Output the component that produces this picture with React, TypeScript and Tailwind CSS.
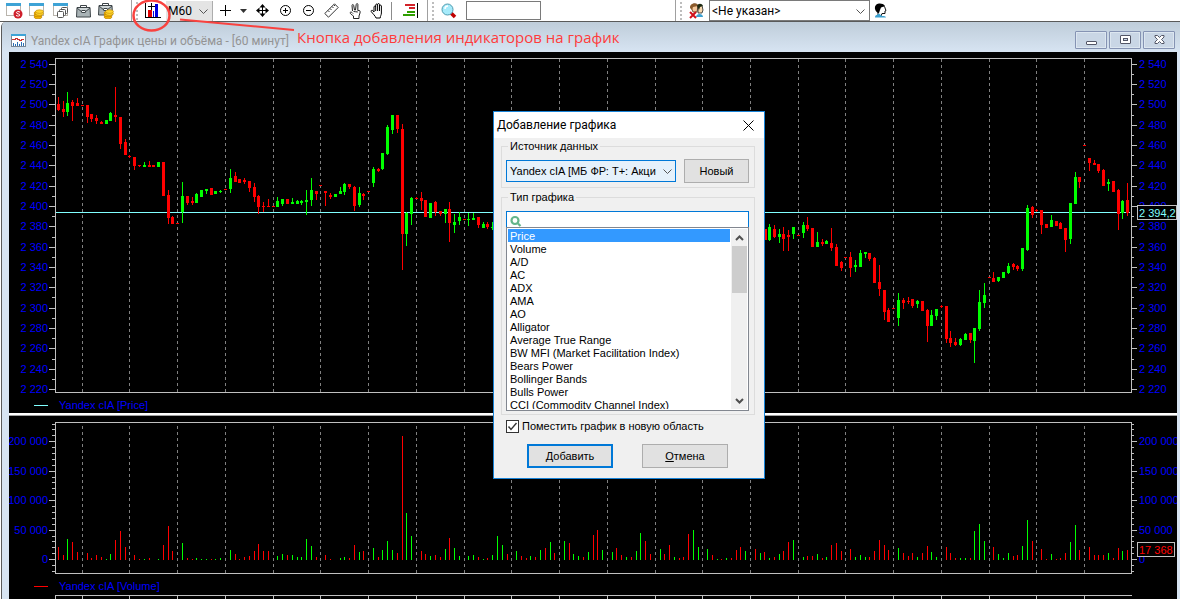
import React from "react";

type Tone = "r" | "g";
type Candle = [number, number, number, number, number, Tone];
type Volume = [number, number, Tone];

const UP = "#00ff00";
const DOWN = "#ff0000";

/* x, high, body top, body bottom, low, tone */
const candles: Candle[] = [
  [58,97,104,110,111,"r"],[63,101,109,112,117,"r"],[67,92,103,112,116,"g"],[72,100,102,106,121,"r"],[77,98,103,106,106,"r"],
  [82,105,105,106,106,"r"],[87,105,105,117,123,"r"],[91,114,114,119,122,"r"],[96,115,118,121,124,"r"],[101,121,122,124,124,"r"],
  [106,120,120,124,124,"g"],[110,112,113,121,121,"g"],[115,87,115,117,122,"r"],[120,117,117,144,149,"r"],[125,139,142,155,155,"r"],
  [129,155,156,157,158,"r"],[134,157,157,166,170,"r"],[139,165,165,166,167,"r"],[144,162,165,167,167,"g"],[149,161,165,167,167,"r"],
  [153,165,165,167,167,"r"],[158,162,162,167,167,"g"],[163,162,162,196,196,"r"],[168,190,195,218,224,"r"],[172,216,217,224,224,"r"],
  [177,223,223,224,224,"r"],[182,182,196,212,223,"g"],[187,196,196,203,205,"r"],[192,197,201,203,205,"r"],[196,193,194,203,203,"g"],
  [201,190,190,197,197,"g"],[206,189,189,191,194,"g"],[211,188,188,195,195,"r"],[215,191,191,194,194,"g"],[220,190,191,192,193,"g"],
  [225,189,189,190,190,"r"],[230,169,178,189,193,"g"],[235,172,176,182,182,"r"],[239,179,179,183,183,"r"],[244,178,180,182,184,"r"],
  [249,181,181,188,192,"r"],[254,183,187,197,202,"r"],[258,195,196,207,214,"r"],[263,202,206,207,212,"r"],[268,199,206,207,207,"r"],
  [273,206,206,207,207,"r"],[277,197,201,207,207,"g"],[282,199,199,204,206,"g"],[287,199,199,204,204,"r"],[292,198,202,204,204,"g"],
  [297,200,201,204,204,"g"],[301,200,201,203,205,"g"],[306,190,200,202,215,"g"],[311,178,190,200,206,"g"],[316,191,191,194,200,"r"],
  [320,185,185,186,186,"r"],[325,191,191,193,206,"r"],[330,193,195,197,199,"r"],[335,194,194,197,197,"g"],[340,187,191,194,194,"g"],
  [344,183,184,192,195,"g"],[349,184,184,187,189,"r"],[354,186,187,206,211,"r"],[359,187,193,205,207,"g"],[363,193,194,196,200,"r"],
  [368,191,191,192,192,"r"],[373,167,169,183,187,"g"],[378,168,169,171,172,"r"],[382,153,153,169,170,"g"],[387,125,127,154,155,"g"],
  [392,115,115,130,134,"g"],[397,115,115,129,133,"r"],[402,124,129,234,270,"r"],[406,212,213,234,246,"g"],[411,197,198,214,225,"g"],
  [416,197,198,199,199,"r"],[421,192,198,201,210,"r"],[425,200,200,217,217,"r"],[430,203,203,218,218,"g"],[435,201,202,212,216,"r"],
  [440,211,211,214,216,"r"],[445,209,209,214,223,"g"],[449,202,209,223,242,"r"],[454,214,222,225,233,"g"],[459,212,217,221,225,"g"],
  [464,219,219,220,220,"r"],[468,213,219,220,226,"g"],[473,213,218,220,220,"g"],[478,217,217,225,228,"r"],[483,222,224,228,228,"g"],
  [487,222,224,227,229,"r"],[492,222,227,228,230,"g"],
  [765,229,229,240,240,"r"],[769,224,227,240,241,"g"],[774,225,229,237,238,"r"],[779,229,234,237,243,"g"],[783,227,234,239,251,"r"],
  [788,230,235,237,251,"r"],[793,227,227,234,239,"g"],[798,235,235,236,236,"r"],[803,222,225,233,238,"g"],[807,217,225,229,231,"r"],
  [812,228,228,247,247,"r"],[817,232,242,247,247,"g"],[822,239,242,244,246,"r"],[826,240,241,244,244,"g"],[831,228,243,248,251,"r"],
  [836,244,247,266,266,"r"],[841,261,262,268,271,"r"],[845,257,257,258,258,"r"],[850,252,257,268,277,"r"],[855,260,265,267,272,"g"],
  [860,250,253,267,267,"g"],[865,252,252,254,258,"g"],[869,253,253,259,261,"r"],[874,257,258,283,283,"r"],[879,265,282,289,296,"r"],
  [884,290,290,312,320,"r"],[888,308,310,322,322,"r"],[893,308,308,309,309,"r"],[898,293,300,318,326,"g"],[903,298,300,303,309,"r"],
  [908,297,301,302,304,"r"],[912,299,299,306,308,"r"],[917,300,301,304,308,"g"],[922,301,301,311,311,"r"],[927,309,310,326,342,"r"],
  [931,310,315,326,326,"g"],[936,309,309,316,320,"g"],[941,305,306,307,308,"r"],[946,306,306,339,343,"r"],[950,331,338,343,347,"r"],
  [955,338,342,345,346,"r"],[960,338,339,345,346,"g"],[965,333,334,340,340,"g"],[970,333,333,340,343,"r"],[974,328,328,341,363,"g"],
  [979,290,302,329,331,"g"],[984,283,295,303,308,"g"],[989,277,277,278,278,"r"],[993,272,278,282,282,"r"],[998,277,277,281,282,"g"],
  [1003,272,272,278,278,"g"],[1008,263,266,273,274,"g"],[1013,263,264,267,270,"r"],[1017,265,266,269,271,"r"],[1022,248,248,269,271,"g"],
  [1027,205,208,250,251,"g"],[1032,206,207,215,218,"r"],[1036,209,210,211,212,"r"],[1041,210,210,225,234,"r"],[1046,224,224,228,228,"r"],
  [1051,215,220,227,227,"g"],[1056,221,221,226,226,"r"],[1060,222,223,229,229,"r"],[1065,228,228,240,252,"r"],[1070,203,203,239,244,"g"],
  [1075,172,177,204,204,"g"],[1079,177,177,182,188,"r"],[1084,145,145,146,146,"r"],[1089,158,158,163,171,"r"],[1094,160,163,165,165,"r"],
  [1098,164,164,171,173,"r"],[1103,169,170,186,186,"r"],[1108,179,182,184,191,"g"],[1113,181,181,192,192,"r"],[1118,189,190,214,230,"r"],
  [1122,200,201,213,219,"g"],[1127,183,200,213,216,"r"],
];

/* x, top, tone */
const volumes: Volume[] = [
  [58,547,"r"],[63,555,"r"],[67,539,"g"],[72,542,"r"],[77,552,"r"],[87,553,"r"],[91,558,"r"],[96,555,"r"],[101,557,"r"],[106,559,"g"],
  [110,554,"g"],[115,540,"r"],[120,531,"r"],[125,547,"r"],[134,555,"r"],[139,559,"r"],[144,559,"g"],[149,558,"r"],[158,559,"g"],[163,545,"r"],
  [168,526,"r"],[172,551,"r"],[182,543,"g"],[187,558,"r"],[192,559,"r"],[196,558,"g"],[201,559,"g"],[206,559,"g"],[211,559,"r"],[215,559,"g"],
  [220,558,"g"],[230,550,"g"],[235,554,"r"],[239,559,"r"],[244,557,"r"],[249,556,"r"],[254,551,"r"],[258,544,"r"],[263,551,"r"],[268,551,"r"],
  [277,556,"g"],[282,554,"g"],[287,555,"r"],[292,555,"g"],[297,557,"g"],[301,557,"g"],[306,539,"g"],[311,546,"g"],[316,557,"r"],[325,555,"r"],
  [330,559,"r"],[340,558,"g"],[344,557,"g"],[349,558,"r"],[354,545,"r"],[359,552,"g"],[363,551,"r"],[373,548,"g"],[378,557,"r"],[382,550,"g"],
  [387,541,"g"],[392,550,"g"],[397,553,"r"],[402,436,"r"],[406,513,"g"],[411,536,"g"],[421,551,"r"],[425,554,"r"],[430,556,"g"],[435,555,"r"],
  [440,557,"r"],[445,549,"g"],[449,538,"r"],[454,548,"g"],[459,556,"g"],[468,556,"g"],[473,555,"g"],[478,557,"r"],[483,559,"g"],[487,558,"r"],
  [492,555,"g"],[497,536,"g"],[502,545,"g"],[507,554,"r"],[516,551,"g"],[521,556,"r"],[526,558,"r"],[530,556,"g"],[535,557,"r"],[540,550,"g"],
  [545,548,"r"],[550,542,"g"],[554,553,"r"],[564,541,"g"],[569,543,"r"],[573,554,"g"],[578,556,"g"],[583,557,"r"],[588,552,"g"],[593,535,"r"],
  [597,530,"r"],[602,550,"g"],[612,552,"g"],[616,548,"r"],[621,555,"r"],[626,557,"g"],[631,557,"r"],[636,551,"g"],[640,533,"g"],[645,541,"r"],
  [650,554,"r"],[660,549,"g"],[664,554,"r"],[669,545,"r"],[674,557,"g"],[679,558,"r"],
  [683,557,"r"],[688,534,"r"],[693,530,"g"],[698,547,"g"],[707,549,"g"],[712,555,"r"],[717,559,"g"],[721,559,"r"],[726,558,"g"],[731,558,"r"],
  [736,550,"r"],[740,547,"r"],[745,551,"g"],[755,549,"r"],[760,553,"g"],[764,552,"r"],[769,558,"g"],[774,557,"r"],[779,554,"g"],[783,551,"r"],
  [788,542,"r"],[793,540,"g"],[803,557,"g"],[807,556,"r"],[812,556,"r"],[817,554,"g"],[822,558,"r"],[826,557,"g"],[831,545,"r"],[836,543,"r"],
  [841,551,"r"],[850,549,"r"],[855,557,"g"],[860,555,"g"],[865,557,"g"],[869,557,"r"],[874,551,"r"],[879,540,"r"],[884,545,"r"],[888,550,"r"],
  [898,548,"g"],[903,553,"r"],[908,556,"r"],[912,553,"r"],[917,557,"g"],[922,553,"r"],[927,546,"r"],[931,552,"g"],[936,557,"g"],[946,547,"r"],
  [950,553,"r"],[955,558,"r"],[960,558,"g"],[965,558,"g"],[970,558,"r"],[974,531,"g"],[979,524,"g"],[984,541,"g"],[993,547,"r"],[998,554,"g"],
  [1003,558,"g"],[1008,553,"g"],[1013,556,"r"],[1017,555,"r"],[1022,546,"g"],[1027,520,"g"],[1032,541,"r"],[1041,549,"r"],[1046,559,"r"],
  [1051,554,"g"],[1056,559,"r"],[1060,558,"r"],[1065,553,"r"],[1070,542,"g"],[1075,525,"g"],[1079,550,"r"],[1089,547,"r"],[1094,555,"r"],
  [1098,555,"r"],[1103,555,"r"],[1108,553,"g"],[1113,558,"r"],[1118,548,"r"],[1122,551,"g"],[1127,550,"r"],
];

const gridX = [82,129,177,225,273,320,368,416,464,511,559,607,655,702,750,798,845,893,941,989,1036,1084];

const priceTicks: [number, string][] = [
  [64,"2 540"],[84,"2 520"],[104,"2 500"],[125,"2 480"],[145,"2 460"],[165,"2 440"],[186,"2 420"],[206,"2 400"],[226,"2 380"],
  [247,"2 360"],[267,"2 340"],[287,"2 320"],[308,"2 300"],[328,"2 280"],[348,"2 260"],[369,"2 240"],[389,"2 220"],
];
const priceMinor = [74,94,115,135,155,176,196,216,237,257,277,297,318,338,359,379];
const volumeTicks: [number, string][] = [[441,"200 000"],[471,"150 000"],[500,"100 000"],[530,"50 000"],[559,"0"]];
const volumeMinor = [424,429,435,447,453,459,465,477,482,488,494,506,512,518,524,536,541,547,553,565,571];

function Axis({ side, top, height, ticks, minor }: { side: "left" | "right"; top: number; height: number; ticks: [number, string][]; minor: number[] }) {
  const left = side === "left";
  return (
    <svg className="block shrink-0 overflow-visible" width={left ? 46 : 45} height={height} viewBox={`0 ${top} ${left ? 46 : 45} ${height}`} aria-hidden="true">
      {ticks.map(([y, label]) => (
        <g key={y}>
          <rect x={left ? 40 : 0} y={y} width={left ? 6 : 5} height={1} fill="#c0c0c0" />
          <text x={left ? 39 : 7} y={y + 4} textAnchor={left ? "end" : "start"} fill="#0000ff" fontSize="11">{label}</text>
        </g>
      ))}
      {minor.map((y) => (
        <rect key={y} x={left ? 43 : 0} y={y} width={left ? 3 : 2} height={1} fill="#c0c0c0" />
      ))}
    </svg>
  );
}

function Grid({ from, to }: { from: number; to: number }) {
  return (
    <g stroke="#808080" strokeDasharray="3 3">
      {gridX.map((x) => <line key={x} x1={x + 0.5} x2={x + 0.5} y1={from} y2={to} />)}
    </g>
  );
}

function Legend({ color, text }: { color: string; text: string }) {
  return (
    <div className="flex h-[20px] items-center gap-[11px] pl-[25px] pt-1 text-[11px] leading-4 text-[#0000ff]">
      <svg width="14" height="1" aria-hidden="true"><rect width="14" height="1" fill={color} /></svg>
      <span>{text}</span>
    </div>
  );
}

function Grip() {
  return (
    <div className="flex h-full shrink-0 items-center gap-[4px]" aria-hidden="true">
      <span className="h-full w-px bg-[#a0a0a0]" />
      <svg width="3" height="18" shapeRendering="crispEdges">
        {[1, 5, 9, 13, 17].map((y) => <rect key={y} x="0" y={y - 1} width="2" height="2" fill="#bdbdbd" />)}
      </svg>
    </div>
  );
}

function Tool({ label, className, children }: { label: string; className: string; children: React.ReactNode }) {
  return (
    <button type="button" aria-label={label} className={"flex h-[20px] shrink-0 items-center justify-center " + className}>{children}</button>
  );
}

const WindowBase = () => (
  <g>
    <rect x="0.5" y="1.5" width="14" height="11" fill="#fff" stroke="#b9b4ac" />
    <rect x="0" y="0" width="15" height="3" fill="#3ea3d6" />
  </g>
);
const Coins = ({ x, y }: { x: number; y: number }) => (
  <g transform={`translate(${x} ${y})`}>
    {[7, 5, 3].map((cy) => <ellipse key={cy} cx="4" cy={cy + 1} rx="4" ry="1.8" fill="#f5b800" stroke="#b77b00" strokeWidth=".6" />)}
    {[4.6, 2.6].map((cy) => <ellipse key={cy} cx="5.5" cy={cy} rx="4" ry="1.8" fill="#ffd42e" stroke="#c08900" strokeWidth=".6" />)}
  </g>
);
const Briefcase = () => (
  <g stroke="#3d4448" strokeWidth="1">
    <path d="M4.5 4V1.5h6V4" fill="none" />
    <path d="M1 3.5h13l.5 9.5h-14z" fill="#a9b3b6" />
    <path d="M1 4l5 4h3l5-4" fill="#cfd6d8" />
    <rect x="6" y="6.5" width="3" height="2" fill="#fff" />
  </g>
);

function Toolbar() {
  return (
    <header className="flex h-[22px] shrink-0 items-center border-b border-[#5a5a5a] bg-white pl-[6px]">
      <div className="flex h-full items-center">
        <Tool label="Закрыть счёт" className="mr-[6px] w-[17px]">
          <svg width="17" height="16"><WindowBase /><circle cx="12" cy="11" r="4.5" fill="#cf1f2b" /><path d="M14 9.2c-1-1-3.6-.8-3.6.5s3.4 1 3.4 2.3-2.600 1.400-3.800.4" fill="none" stroke="#fff" /></svg>
        </Tool>
        <Tool label="Позиции" className="mr-[8px] w-[16px]">
          <svg width="16" height="16"><WindowBase /><Coins x={5} y={6} /></svg>
        </Tool>
        <Tool label="Окна" className="mr-[7px] w-[16px]">
          <svg width="16" height="16"><WindowBase /><g fill="#fff" stroke="#555"><rect x="8.500" y="4.500" width="6" height="6" rx="1" /><rect x="6.500" y="6.500" width="6" height="6" rx="1" /><rect x="4.500" y="8.500" width="6" height="6" rx="1" /></g></svg>
        </Tool>
        <Tool label="Портфель" className="mr-[7px] w-[15px]">
          <svg width="15" height="14"><Briefcase /></svg>
        </Tool>
        <Tool label="Портфель и деньги" className="mr-[16px] w-[17px]">
          <svg width="17" height="17"><Briefcase /><Coins x={6} y={7} /></svg>
        </Tool>
      </div>
      <Grip />
      <Tool label="Добавить индикатор" className="ml-[5px] mr-[5px] w-[17px]">
        <svg width="17" height="16" shapeRendering="crispEdges">
          <path d="M1 0h1v14h15v1H1z" fill="#000" />
          <rect x="4" y="7" width="4" height="7" fill="#e00000" /><rect x="11" y="1" width="3" height="13" fill="#0000e0" />
          <path d="M7 0h1v3h3v1H8v3H7V4H4V3h3z" fill="#000" /><rect x="9" y="8" width="1" height="6" fill="#0000e0" />
        </svg>
      </Tool>
      <label className="relative block h-[20px] w-[47px] shrink-0">
        <span className="sr-only">Период</span>
        <select className="block h-full w-full appearance-none border-r border-[#adadad] bg-[#e4e4e4] pl-[2px] font-[Roboto,sans-serif] text-[12px] leading-4 text-black"><option>M60</option></select>
        <svg className="pointer-events-none absolute right-[5px] top-[8px]" width="9" height="6"><path d="M.5.5l4 4 4-4" fill="none" stroke="#555" /></svg>
      </label>
      <div className="flex h-full items-center pl-[7px]">
        <Tool label="Перекрестие" className="mr-[9px] w-[11px]"><svg width="11" height="11" shapeRendering="crispEdges"><path d="M5 0h1v11H5zM0 5h11v1H0z" /></svg></Tool>
        <Tool label="Выбор курсора" className="mr-[9px] w-[7px]"><svg width="7" height="4"><path d="M0 0h7L3.500 4z" fill="#333" /></svg></Tool>
        <Tool label="Перемещение" className="mr-[11px] w-[13px]">
          <svg width="13" height="13"><path d="M6.500 1v11M1 6.500h11" stroke="#000" /><path d="M6.500 0L9.500 3.500h-6zM6.500 13l3-3.500h-6zM0 6.500l3.500-3v6zM13 6.500l-3.500-3v6z" fill="#000" /></svg>
        </Tool>
        <Tool label="Увеличить" className="mr-[12px] w-[11px]"><svg width="11" height="11"><circle cx="5.500" cy="5.500" r="5" fill="none" stroke="#000" /><path d="M3 5.500h5M5.500 3v5" stroke="#000" /></svg></Tool>
        <Tool label="Уменьшить" className="mr-[10px] w-[11px]"><svg width="11" height="11"><circle cx="5.500" cy="5.500" r="5" fill="none" stroke="#000" /><path d="M3 5.500h5" stroke="#000" /></svg></Tool>
        <Tool label="Линейка" className="mr-[10px] w-[15px]"><svg width="15" height="15"><path d="M.8 10.500L10.500.8l3.700 3.700-9.700 9.700z" fill="#fff" stroke="#333" /><path d="M4 7.500l1.500 1.500M6 5.500l1.500 1.500M8 3.500l1.500 1.500M10 2l1 1" stroke="#333" /></svg></Tool>
        <Tool label="Указатель" className="mr-[8px] w-[13px]">
          <svg width="13" height="16"><path d="M3.500 8L3 2.500c0-1.300 1.500-1.300 1.700 0L5.500 7h1l.7-5.500c.2-1.300 1.700-1.200 1.700 0L8.800 7.500c2-.5 2.700.5 2.200 2.500l-1 3v2.500H4.500V13C3 12 .8 10.500 1.200 9.500c.5-1 1.800-.2 2.800 1" fill="#fff" stroke="#222" /><path d="M4.500 8.500c1.500 0 3 .5 4.300.5" fill="none" stroke="#222" /></svg>
        </Tool>
        <Tool label="Рука" className="mr-[6px] w-[15px]">
          <svg width="15" height="16"><path d="M4 9V4c0-1.200 1.600-1.200 1.700 0V2c.1-1.300 1.800-1.300 1.900 0v-.5c.1-1.300 1.800-1.300 1.900 0V3c.1-1.200 1.800-1.200 1.900 0v7c0 2-1 2.500-1.200 5H6C5.500 13 2.500 10.500 1.200 8.500.7 7.500 2 6.800 2.800 7.600z" fill="#fff" stroke="#000" /><path d="M5.700 4v4M7.600 2v6M9.500 3v5" stroke="#000" /></svg>
        </Tool>
      </div>
      <span className="h-[18px] w-px bg-[#8c8c8c]" />
      <Tool label="Уровни" className="ml-[11px] mr-[9px] w-[15px]">
        <svg width="15" height="16" shapeRendering="crispEdges"><path d="M2 1h10v2H2zM6 4h6v2H6z" fill="#d2232a" /><path d="M4 8h8v2H4zM0 11h12v2H0z" fill="#2f9e00" /><rect x="14" width="1" height="15" /></svg>
      </Tool>
      <Grip />
      <Tool label="Поиск" className="ml-[6px] mr-[9px] w-[16px]">
        <svg width="16" height="16"><path d="M10 10l4 4" stroke="#c00000" strokeWidth="3.500" /><circle cx="6.500" cy="6.500" r="5.500" fill="#a6ebfb" stroke="#4e9aae" /><path d="M4 6c0-2 1.500-3 3-3" stroke="#fff" strokeWidth="1.500" fill="none" /></svg>
      </Tool>
      <input type="text" aria-label="Строка поиска" className="h-[19px] w-[75px] shrink-0 border border-[#7a7a7a] bg-white px-1 text-[12px]" />
      <div className="ml-[134px] h-full"><Grip /></div>
      <Tool label="Удалить клиента" className="ml-[6px] mr-[5px] w-[15px]">
        <svg width="15" height="16">
          <path d="M2 4c0-4 7-4 7-1l-1 6H4z" fill="#f3c79c" stroke="#5a3416" strokeWidth=".8" /><path d="M1 5c0-6 8-5 8-2L4 4 3 7z" fill="#8b5a2b" />
          <path d="M9 4c1-3 5-2 4.500 1l.5 2-1 3H9z" fill="#f8d9b0" stroke="#222" strokeWidth=".8" /><path d="M8 3c1-3 5-3 6 0l-3 1-1 3z" fill="#1d2a12" />
          <path d="M7 14c0-4 7-4 7 0z" fill="#3ba0d0" /><path d="M1 9l6 6M7 9l-6 6" stroke="#d0101a" strokeWidth="2" />
        </svg>
      </Tool>
      <label className="relative block h-[21px] w-[161px] shrink-0">
        <span className="sr-only">Клиент</span>
        <select className="block h-full w-full appearance-none border border-[#7a7a7a] bg-white pl-[2px] font-[Roboto,sans-serif] text-[12px] leading-4 text-black"><option>&lt;Не указан&gt;</option></select>
        <svg className="pointer-events-none absolute right-[5px] top-[9px]" width="9" height="6"><path d="M.5.5l4 4 4-4" fill="none" stroke="#555" /></svg>
      </label>
      <Tool label="Клиент" className="ml-[4px] w-[14px]">
        <svg width="14" height="16">
          <path d="M4 4c1-3 7-2 7 1l1 2.500-1 .5v2.500H8L7 13H4z" fill="#fff" stroke="#111" />
          <path d="M1 6C0 0 8-1 11 3L7 4.500 6 7l-1 3C3 10 1.500 8 1 6z" fill="#000" />
          <path d="M1 14.500c0-3 3-2.500 4-4l3 2.500c2 0 4 0 4 1.500z" fill="#3ba0d0" />
        </svg>
      </Tool>
    </header>
  );
}

const captionButton = "flex h-[18px] w-[32px] items-center justify-center rounded-[1px] border border-[#8593b3] bg-[#c9d6e5] shadow-[inset_0_0_0_1px_#dce6f0]";

function TitleBar() {
  return (
    <div className="flex h-[30px] shrink-0 items-center bg-gradient-to-b from-[#bfcdda] to-[#d7e4f2] pl-[9px] pr-[5px]">
      <svg className="mt-[7px]" width="15" height="13" shapeRendering="crispEdges">
        <rect x="0" y="0" width="15" height="13" fill="#7a8794" /><rect x="1" y="1" width="13" height="11" fill="#fff" /><rect width="15" height="2" fill="#3ea3d6" />
        <path d="M1 5h3v-1h2v1h2v1h2v-1h3" fill="none" stroke="#c83030" /><path d="M2 9h1v3H2zM4 10h1v2H4zM6 8h1v4H6zM8 10h1v2H8zM10 8h1v4h-1zM12 9h1v3h-1z" fill="#2b6fb5" />
      </svg>
      <h1 className="ml-[5px] mt-[7px] flex-1 whitespace-nowrap font-[Roboto,sans-serif] text-[12px] leading-4 text-[#949494]">Yandex cIA График цены и объёма - [60 минут]</h1>
      <div className="mt-[6px] flex gap-[2px]">
        <button type="button" aria-label="Свернуть" className={captionButton}><svg width="11" height="12"><rect x=".5" y="7.500" width="10" height="3" rx=".5" fill="#fff" stroke="#535666" /></svg></button>
        <button type="button" aria-label="Развернуть" className={captionButton}><svg width="11" height="10"><rect x=".5" y=".5" width="10" height="8" rx=".5" fill="#fff" stroke="#535666" /><rect x="3.500" y="3.500" width="4" height="2" fill="#c9d6e5" stroke="#535666" /></svg></button>
        <button type="button" aria-label="Закрыть" className={captionButton}><svg width="11" height="10"><path d="M1 .5h2.500l2 2 2-2H10v1.500L7.500 4.500 10 7v1.500H7.500l-2-2-2 2H1V7l2.500-2.500L1 2z" fill="#fff" stroke="#535666" /></svg></button>
      </div>
    </div>
  );
}

function PricePanel() {
  return (
    <section className="flex h-[361px] shrink-0 flex-col overflow-hidden pt-[6px]">
      <div className="flex h-[335px]">
        <Axis side="left" top={58} height={335} ticks={priceTicks} minor={priceMinor} />
        <div className="min-w-0 flex-1 border border-[#c0c0c0]">
          <svg className="block h-full w-full" viewBox="56 59 1075 333" preserveAspectRatio="none" shapeRendering="crispEdges" role="img" aria-label="График цены">
            <Grid from={59} to={392} />
            <rect x="56" y="212" width="1074" height="1" fill="#80ffff" />
            {candles.map(([x, high, top, bottom, low, tone]) => (
              <g key={x} fill={tone === "g" ? UP : DOWN}>
                <rect x={x} y={high} width="1" height={low - high} />
                <rect x={x - 1} y={top} width="3" height={bottom - top} />
              </g>
            ))}
          </svg>
        </div>
        <div className="relative shrink-0">
          <Axis side="right" top={58} height={335} ticks={priceTicks} minor={priceMinor} />
          <output className="absolute left-[5px] top-[147px] flex h-[15px] w-[40px] items-center whitespace-nowrap border border-[#c0c0c0] bg-black pl-px text-[11px] leading-3 text-[#80ffff]">2 394,2</output>
        </div>
      </div>
      <Legend color="#80ffff" text="Yandex cIA [Price]" />
    </section>
  );
}

function VolumePanel() {
  return (
    <section className="flex h-[179px] shrink-0 flex-col overflow-hidden pt-[6px]">
      <div className="flex h-[152px]">
        <Axis side="left" top={422} height={152} ticks={volumeTicks} minor={volumeMinor} />
        <div className="min-w-0 flex-1 border border-[#c0c0c0]">
          <svg className="block h-full w-full" viewBox="56 423 1075 150" preserveAspectRatio="none" shapeRendering="crispEdges" role="img" aria-label="График объёма">
            <Grid from={426} to={573} />
            {volumes.map(([x, top, tone]) => (
              <rect key={x} x={x} y={top} width="1" height={560 - top} fill={tone === "g" ? UP : DOWN} />
            ))}
          </svg>
        </div>
        <div className="relative shrink-0">
          <Axis side="right" top={422} height={152} ticks={volumeTicks} minor={volumeMinor} />
          <output className="absolute left-[5px] top-[120px] flex h-[15px] w-[38px] items-center whitespace-nowrap border border-[#c0c0c0] bg-black pl-px text-[11px] leading-3 text-[#ff0000]">17 368</output>
        </div>
      </div>
      <Legend color="#ff0000" text="Yandex cIA [Volume]" />
    </section>
  );
}

function LowerPanel() {
  return (
    <section className="flex min-h-0 flex-1 overflow-hidden pl-[46px] pr-[45px]">
      <div className="min-w-0 flex-1 border-l border-t border-[#c0c0c0]">
        <svg className="block h-full w-full" viewBox="56 0 1076 3" preserveAspectRatio="none" shapeRendering="crispEdges" aria-hidden="true">
          {gridX.map((x) => <rect key={x} x={x} y="0" width="1" height="3" fill="#c0c0c0" />)}
        </svg>
      </div>
    </section>
  );
}

const chartTypes = [
  "Price", "Volume", "A/D", "AC", "ADX", "AMA", "AO", "Alligator", "Average True Range", "BW MFI (Market Facilitation Index)",
  "Bears Power", "Bollinger Bands", "Bulls Power", "CCI (Commodity Channel Index)",
];

function AddChartDialog() {
  return (
    <div role="dialog" aria-labelledby="dialog-title" className="absolute left-[493px] top-[111px] w-[272px] border border-[#1883d7] bg-[#f0f0f0] pb-[10px] text-[11px] leading-[13px] text-black">
      <div className="flex h-[26px] items-center justify-between bg-white pl-[3px] pr-[10px]">
        <h2 id="dialog-title" className="font-[Roboto,sans-serif] text-[12px] leading-4">Добавление графика</h2>
        <button type="button" aria-label="Закрыть окно"><svg width="11" height="11"><path d="M.5.5l10 10M10.500.5l-10 10" stroke="#000" fill="none" /></svg></button>
      </div>
      <form className="px-[7px] pt-[2px]" onSubmit={(e) => e.preventDefault()}>
        <fieldset className="mr-[2px] border border-[#dcdcdc] pb-[4px] pl-[4px] pr-[5px]">
          <legend className="ml-[2px] px-[2px]">Источник данных</legend>
          <div className="mt-[6px] flex items-center justify-between">
            <label className="relative block h-[22px] w-[170px]">
              <span className="sr-only">Источник</span>
              <select className="block h-full w-full appearance-none border border-[#0078d7] bg-[#e5f1fb] pl-[3px] pr-[19px] text-[11px] text-black"><option>Yandex cIA [МБ ФР: T+: Акции]</option></select>
              <svg className="pointer-events-none absolute right-[4px] top-[9px]" width="9" height="6"><path d="M.5.5l4 4 4-4" fill="none" stroke="#555" /></svg>
            </label>
            <button type="button" className="h-[24px] w-[65px] border border-[#adadad] bg-[#e1e1e1]">Новый</button>
          </div>
        </fieldset>
        <fieldset className="mr-[2px] mt-[3px] border border-[#dcdcdc] pb-[3px] pl-[4px] pr-[5px]">
          <legend className="ml-[2px] px-[2px]">Тип графика</legend>
          <label className="mt-[7px] flex h-[16px] items-end border border-b-0 border-[#0078d7] bg-white pl-[3px]">
            <svg width="12" height="12" aria-hidden="true"><circle cx="5" cy="5.500" r="3.500" fill="#fff" stroke="#63b58a" strokeWidth="2.200" /><path d="M8 8.500l2.500 2.500" stroke="#63b58a" strokeWidth="2.200" /></svg>
            <input type="text" aria-label="Поиск графика" className="ml-1 h-full w-[200px] outline-none" />
          </label>
          <div className="flex h-[184px] border border-[#828790] bg-white p-px">
            <ul role="listbox" aria-label="Тип графика" className="h-full flex-1 overflow-hidden leading-3">
              {chartTypes.map((name, i) => (
                <li key={name} role="option" aria-selected={i === 0} className={i === 0 ? "bg-[#3399ff] pl-[2px] pt-px text-white" : "pl-[2px] pt-px"}>{name}</li>
              ))}
            </ul>
            <div className="ml-px flex w-[16px] flex-col items-center bg-[#f0f0f0]">
              <button type="button" aria-label="Вверх" className="flex h-[17px] items-center"><svg width="9" height="6"><path d="M1 5l3.500-3.500L8 5" fill="none" stroke="#505050" strokeWidth="2" /></svg></button>
              <span className="h-[47px] w-[15px] bg-[#cdcdcd]" />
              <button type="button" aria-label="Вниз" className="mt-auto flex h-[17px] items-center"><svg width="9" height="6"><path d="M1 1l3.500 3.500L8 1" fill="none" stroke="#505050" strokeWidth="2" /></svg></button>
            </div>
          </div>
        </fieldset>
        <label className="ml-[5px] mt-[5px] flex items-center gap-[3px]">
          <span className="relative block h-[13px] w-[13px]">
            <input type="checkbox" defaultChecked className="block h-[13px] w-[13px] appearance-none border border-[#333] bg-white" />
            <svg className="pointer-events-none absolute left-0 top-0" width="13" height="13"><path d="M2.500 6.500L5 9.500l5.500-6.500" fill="none" stroke="#333" strokeWidth="1.400" /></svg>
          </span>
          Поместить график в новую область
        </label>
        <div className="ml-[26px] mt-[11px] flex gap-[29px]">
          <button type="submit" className="h-[24px] w-[86px] border-2 border-[#0078d7] bg-[#e1e1e1]">Добавить</button>
          <button type="button" className="h-[24px] w-[86px] border border-[#adadad] bg-[#e1e1e1]"><span className="underline">О</span>тмена</button>
        </div>
      </form>
    </div>
  );
}

function Callout() {
  return (
    <>
      <svg className="pointer-events-none absolute left-[130px] top-0" width="170" height="34" aria-hidden="true">
        <ellipse cx="21.500" cy="15.500" rx="18" ry="15" fill="none" stroke="#f9423f" strokeWidth="2.500" />
        <path d="M50 19.500L164 30" stroke="#f9423f" strokeWidth="2" />
      </svg>
      <p className="absolute left-[297px] top-[27px] whitespace-nowrap font-['Comic_Sans_MS','Open_Sans',sans-serif] text-[15px] leading-5 text-[#ff3b3b]">Кнопка добавления индикаторов на график</p>
    </>
  );
}

export default function App() {
  return (
    <div className="relative flex h-screen flex-col overflow-hidden bg-white font-['Liberation_Sans',sans-serif]">
      <Toolbar />
      <main className="ml-px flex min-h-0 flex-1 flex-col overflow-hidden rounded-tl-[5px] border-l border-[#5a5a5a] bg-[#d7e4f2]">
        <TitleBar />
        <div className="ml-[7px] mr-[3px] flex min-h-0 flex-1 flex-col bg-black">
          <PricePanel />
          <div className="h-[3px] shrink-0 border-b border-[#a0a0a0] bg-white" />
          <VolumePanel />
          <LowerPanel />
        </div>
      </main>
      <Callout />
      <AddChartDialog />
    </div>
  );
}
